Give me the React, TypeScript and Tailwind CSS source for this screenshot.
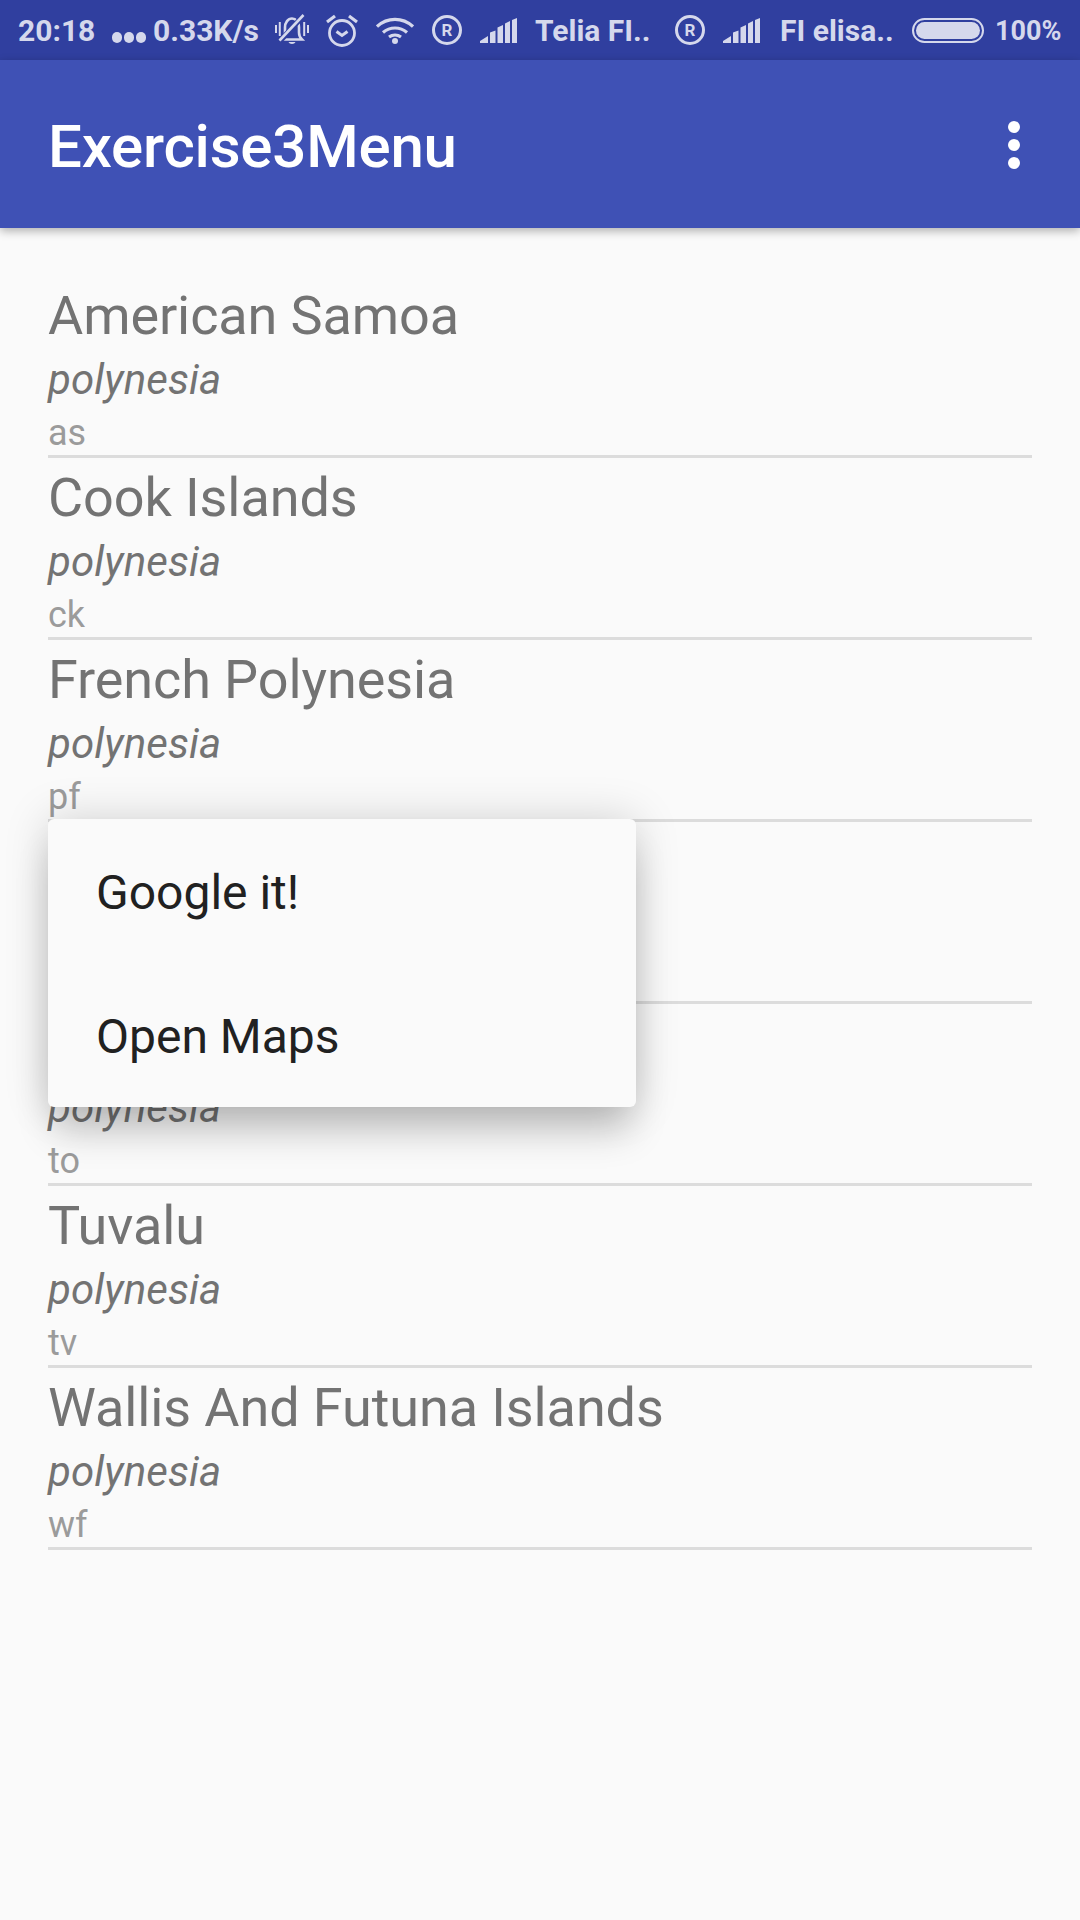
const rows = [
  ["American Samoa", "as"],
  ["Cook Islands", "ck"],
  ["French Polynesia", "pf"],
  ["", ""],
  ["", "to"],
  ["Tuvalu", "tv"],
  ["Wallis And Futuna Islands", "wf"],
];

const ink = "#d5d8ec";

function Muted() {
  return (
    <svg width="34" height="32" viewBox="0 0 34 32" fill="none" stroke={ink} strokeWidth="2.6">
      <path d="M7 25.500c1.500-1.500 3-3.500 3-7v-5c0-5 3-9 7-9s7 4 7 9v5c0 3.500 1.500 5.500 3 7H7z" />
      <path d="M13.500 28h7c-1 2.500-6 2.500-7 0z" fill={ink} stroke="none" />
      <path d="M5 27L29 1" stroke="#303f9f" strokeWidth="5.500" />
      <path d="M4.500 26.500L28.500 1" />
      <path d="M1 11v8M4.800 8v14M29.200 8v14M33 11v8" strokeWidth="2" />
    </svg>
  );
}

function Alarm() {
  return (
    <svg width="32" height="33" viewBox="0 0 32 33" fill="none" stroke={ink} strokeWidth="2.800">
      <circle cx="16" cy="19" r="12.500" />
      <path d="M10.500 17.500l5.500 4 5.500-4" strokeWidth="3" />
      <path d="M1 8l8-6M31 8l-8-6" strokeWidth="3.200" />
    </svg>
  );
}

function Wifi() {
  return (
    <svg width="38" height="27" viewBox="0 0 38 27" fill="none" stroke={ink} strokeWidth="3.200">
      <path d="M1 9.500c10.500-9.500 25.500-9.500 36 0M7 15.500c7-6 17-6 24 0M13 20c3.500-2.500 8.500-2.500 12 0" />
      <circle cx="19" cy="24" r="3" fill={ink} stroke="none" />
    </svg>
  );
}

function Registered() {
  return (
    <span className="flex h-[30px] w-[30px] items-center justify-center rounded-full border-[3px] border-[#d5d8ec] text-[17px] font-bold leading-none text-[#d5d8ec]">
      R
    </span>
  );
}

function Signal() {
  return (
    <svg width="37" height="25" viewBox="0 0 37 25" fill={ink}>
      <path d="M0 25v-2l8-5v7zM10 25V14.500l5.500-2V25zM17.500 25V9.500l5.500-2.500v18zM25 25V5.500l5-2.500v22zM32 25V2l5-2v25z" />
    </svg>
  );
}

function Battery() {
  return (
    <span className="flex h-[25px] w-[72px] items-center rounded-full border-[2px] border-[#d5d8ec] p-[2px]">
      <span className="h-full w-full rounded-full bg-[#d5d8ec]" />
    </span>
  );
}

export default function App() {
  return (
    <div className="relative h-[1920px] w-[1080px] overflow-hidden bg-[#fafafa] font-['Roboto',sans-serif]">
      <div className="flex h-[60px] items-center bg-[#303f9f] pl-[18px] text-[30px] font-bold leading-none text-[#d5d8ec]">
        <span className="w-[94px] pt-[2px]">20:18</span>
        <span className="flex w-[41px] gap-[2px] pt-[14px]">
          <span className="h-[11px] w-[10px] rounded-full bg-[#d5d8ec]" />
          <span className="h-[11px] w-[10px] rounded-full bg-[#d5d8ec]" />
          <span className="h-[11px] w-[10px] rounded-full bg-[#d5d8ec]" />
        </span>
        <span className="w-[122px] pt-[2px]">0.33K/s</span>
        <span className="mr-[17px]"><Muted /></span>
        <span className="mr-[18px]"><Alarm /></span>
        <span className="mr-[18px]"><Wifi /></span>
        <span className="mr-[18px]"><Registered /></span>
        <span className="mr-[18px]"><Signal /></span>
        <span className="w-[140px] pt-[2px]">Telia FI..</span>
        <span className="mr-[18px]"><Registered /></span>
        <span className="mr-[20px]"><Signal /></span>
        <span className="w-[132px] pt-[2px]">FI elisa..</span>
        <span className="mr-[11px]"><Battery /></span>
        <span className="pt-[2px] text-[27px]">100%</span>
      </div>
      <header className="relative z-10 flex h-[168px] items-center justify-between bg-[#3f51b5] pl-[48px] pr-[60px] shadow-[0_3px_9px_rgba(0,0,0,0.3)]">
        <h1 className="pt-[5px] text-[60px] font-medium leading-none tracking-[-0.2px] text-white">Exercise3Menu</h1>
        <span className="flex flex-col gap-[6px] pt-[2px]">
          <span className="h-[12px] w-[12px] rounded-full bg-white" />
          <span className="h-[12px] w-[12px] rounded-full bg-white" />
          <span className="h-[12px] w-[12px] rounded-full bg-white" />
        </span>
      </header>
      <main className="px-[48px] pt-[48px]">
        {rows.map(([name, code], i) => (
          <div key={i} className="h-[182px] border-b-[3px] border-[#dcdcdc]">
            <div className="h-[62px] pt-[9px] text-[54px] leading-[62px] tracking-[-0.1px] text-[#737373]">{name}</div>
            <div className="h-[62px] pt-[9px] text-[42px] italic leading-[66px] tracking-[0.1px] text-[#737373]">{i === 3 ? "" : "polynesia"}</div>
            <div className="h-[55px] pt-[6px] text-[36px] leading-[55px] text-[#9b9b9b]">{code}</div>
          </div>
        ))}
      </main>
      <div className="absolute left-[48px] top-[819px] z-20 w-[588px] rounded-[6px] bg-[#fafafa] shadow-[0_30px_36px_-6px_rgba(0,0,0,0.2),0_0_44px_rgba(0,0,0,0.17)]">
        <div className="flex h-[144px] items-center px-[48px] pt-[4px] text-[48px] text-[#212121]">Google it!</div>
        <div className="flex h-[144px] items-center px-[48px] pt-[4px] text-[48px] text-[#212121]">Open Maps</div>
      </div>
    </div>
  );
}
